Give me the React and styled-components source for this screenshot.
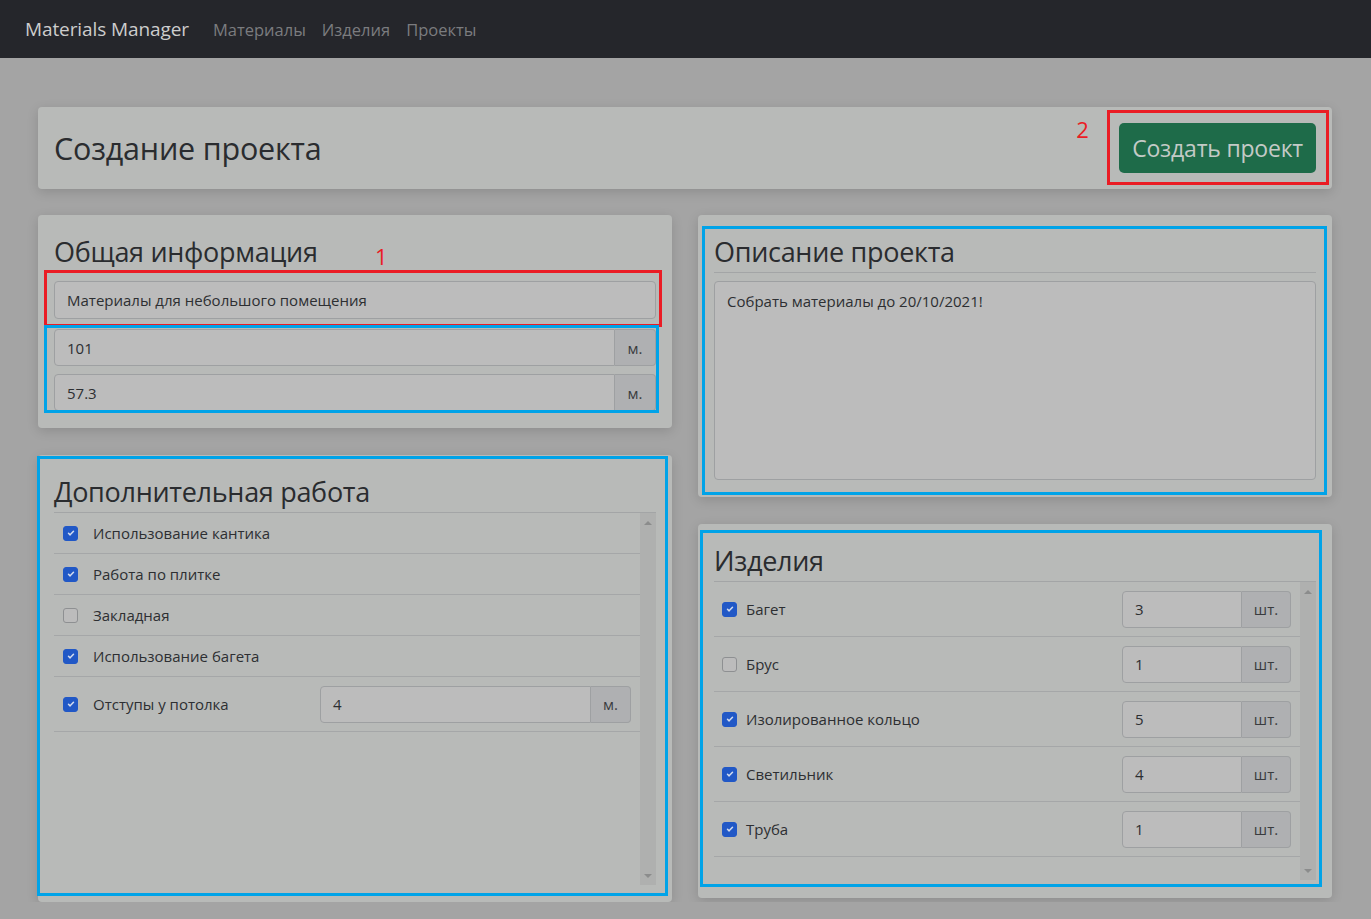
import styled, { createGlobalStyle } from "styled-components";

const works = [
  { label: "Использование кантика", checked: true },
  { label: "Работа по плитке", checked: true },
  { label: "Закладная", checked: false },
  { label: "Использование багета", checked: true },
  { label: "Отступы у потолка", checked: true, value: "4", unit: "м." },
];

const products = [
  { label: "Багет", checked: true, value: "3" },
  { label: "Брус", checked: false, value: "1" },
  { label: "Изолированное кольцо", checked: true, value: "5" },
  { label: "Светильник", checked: true, value: "4" },
  { label: "Труба", checked: true, value: "1" },
];

const Check = ({ checked }) => (
  <CheckBox $checked={checked}>
    {checked && (
      <svg width="10" height="10" viewBox="0 0 20 20">
        <path
          d="M5 10.5l3.2 3.2L15 6.5"
          fill="none"
          stroke="#d3dcee"
          strokeWidth="3"
          strokeLinecap="round"
          strokeLinejoin="round"
        />
      </svg>
    )}
  </CheckBox>
);

const Scroll = () => (
  <Track>
    <Arrow $up />
    <Arrow />
  </Track>
);

const App = () => {
  return (
    <>
      <GlobalStyle />
      <Navbar>
        <Brand>Materials Manager</Brand>
        <NavLinks>
          <NavLink>Материалы</NavLink>
          <NavLink>Изделия</NavLink>
          <NavLink>Проекты</NavLink>
        </NavLinks>
      </Navbar>

      <Main>
        <HeaderCard>
          <PageTitle>Создание проекта</PageTitle>
          <Marked>
            <CreateButton>Создать проект</CreateButton>
            <Annotation $color="red" $t={-13} $l={-12} $r={-13} $b={-12} />
            <Note style={{ left: -43, top: -5 }}>2</Note>
          </Marked>
        </HeaderCard>

        <Columns>
          <Column>
            <Card>
              <Title>Общая информация</Title>
              <Marked>
                <TextInput>Материалы для небольшого помещения</TextInput>
                <Annotation $color="red" $t={-11} $l={-10} $r={-6} $b={-8} />
                <Note style={{ left: 321, top: -36 }}>1</Note>
              </Marked>
              <Marked>
                <Groups>
                  <InputGroup>
                    <GroupInput>101</GroupInput>
                    <Addon $w={41}>м.</Addon>
                  </InputGroup>
                  <InputGroup>
                    <GroupInput>57.3</GroupInput>
                    <Addon $w={41}>м.</Addon>
                  </InputGroup>
                </Groups>
                <Annotation $color="blue" $t={-4} $l={-10} $r={-3} $b={-2} />
              </Marked>
            </Card>

            <Card $marked>
              <Title $divider>Дополнительная работа</Title>
              <ListArea $h={372}>
                <List>
                  {works.map((w) => (
                    <WorkRow key={w.label} $tall={!!w.value}>
                      <Check checked={w.checked} />
                      <WorkLabel>{w.label}</WorkLabel>
                      {w.value && (
                        <InputGroup $grow>
                          <GroupInput>{w.value}</GroupInput>
                          <Addon $w={40}>{w.unit}</Addon>
                        </InputGroup>
                      )}
                    </WorkRow>
                  ))}
                </List>
                <Scroll />
              </ListArea>
              <Annotation $color="blue" $t={1} $l={-1} $r={4} $b={6} />
            </Card>
          </Column>

          <Column>
            <Card $marked>
              <Title $divider $gap>Описание проекта</Title>
              <TextArea>Собрать материалы до 20/10/2021!</TextArea>
              <Annotation $color="blue" $t={11} $l={4} $r={5} $b={2} />
            </Card>

            <Card $marked $bottom={18}>
              <Title $divider>Изделия</Title>
              <ListArea $h={298}>
                <List>
                  {products.map((p) => (
                    <ProductRow key={p.label}>
                      <Check checked={p.checked} />
                      <ProductLabel>{p.label}</ProductLabel>
                      <InputGroup $width={169}>
                        <GroupInput>{p.value}</GroupInput>
                        <Addon $w={49}>шт.</Addon>
                      </InputGroup>
                    </ProductRow>
                  ))}
                </List>
                <Scroll />
              </ListArea>
              <Annotation $color="blue" $t={6} $l={2} $r={10} $b={11} />
            </Card>
          </Column>
        </Columns>
      </Main>
    </>
  );
};

const GlobalStyle = createGlobalStyle`
  * { box-sizing: border-box; }
  body {
    margin: 0;
    background: #a4a4a4;
    font-family: "Open Sans", "Noto Sans", sans-serif;
    color: #2b2d30;
  }
`;

const Navbar = styled.nav`
  height: 58px;
  background: #25262b;
  display: flex;
  align-items: center;
  padding-left: 25px;
`;

const Brand = styled.div`
  font-size: 19px;
  color: #cdcdcd;
  letter-spacing: -0.1px;
`;

const NavLinks = styled.div`
  display: flex;
  gap: 16px;
  margin-left: 24px;
`;

const NavLink = styled.a`
  font-size: 16.5px;
  color: #7b7c7f;
`;

const Main = styled.main`
  width: 1294px;
  margin: 49px 0 0 38px;
`;

const HeaderCard = styled.div`
  height: 82px;
  background: #b8bab8;
  border-radius: 4px;
  box-shadow: 0 3px 12px rgba(0, 0, 0, 0.14);
  display: flex;
  align-items: center;
  justify-content: space-between;
  padding: 0 16px;
`;

const PageTitle = styled.h1`
  margin: 0;
  font-size: 30.5px;
  font-weight: 400;
  color: #2a2c2f;
  letter-spacing: -0.2px;
`;

const Marked = styled.div`
  position: relative;
`;

const Annotation = styled.span`
  position: absolute;
  top: ${(p) => p.$t}px;
  left: ${(p) => p.$l}px;
  right: ${(p) => p.$r}px;
  bottom: ${(p) => p.$b}px;
  border: 3px solid ${(p) => (p.$color === "red" ? "#ea1c24" : "#00a3e8")};
  pointer-events: none;
`;

const Note = styled.span`
  position: absolute;
  font-size: 22px;
  color: #ea1c24;
  line-height: 1;
`;

const CreateButton = styled.button`
  height: 50px;
  padding: 0 13px;
  border: none;
  border-radius: 5px;
  background: #1e6b49;
  color: #c3cac6;
  font-family: inherit;
  font-size: 23px;
  letter-spacing: -0.2px;
`;

const Columns = styled.div`
  display: grid;
  grid-template-columns: 634px 634px;
  column-gap: 26px;
  margin-top: 26px;
  align-items: start;
`;

const Column = styled.div`
  display: flex;
  flex-direction: column;
  gap: 27px;
`;

const Card = styled.section`
  position: relative;
  background: #b8bab8;
  border-radius: 4px;
  box-shadow: 0 3px 12px rgba(0, 0, 0, 0.14);
  padding: 20px 16px ${(p) => p.$bottom || 17}px;
`;

const Title = styled.h2`
  margin: 0 0 ${(p) => (p.$gap ? 8 : p.$divider ? 0 : 12)}px;
  font-size: 27px;
  line-height: 34px;
  font-weight: 400;
  color: #2a2c2f;
  letter-spacing: -0.3px;
  padding-bottom: ${(p) => (p.$divider ? 3 : 0)}px;
  border-bottom: ${(p) => (p.$divider ? "1px solid #a3a5a6" : "none")};
`;

const field = `
  background: #bcbcbc;
  border: 1px solid #9ea0a2;
  font-size: 15px;
  color: #2d2f32;
  display: flex;
  align-items: center;
  padding: 0 12px;
`;

const TextInput = styled.div`
  ${field}
  height: 38px;
  border-radius: 4px;
`;

const Groups = styled.div`
  display: flex;
  flex-direction: column;
  gap: 8px;
  margin-top: 10px;
`;

const InputGroup = styled.div`
  display: flex;
  height: 37px;
  width: ${(p) => (p.$width ? `${p.$width}px` : "auto")};
  flex: ${(p) => (p.$grow ? "1" : "none")};
`;

const GroupInput = styled.div`
  ${field}
  flex: 1;
  border-radius: 4px 0 0 4px;
`;

const Addon = styled.div`
  width: ${(p) => p.$w}px;
  background: #afb0b2;
  border: 1px solid #9ea0a2;
  border-left: none;
  border-radius: 0 4px 4px 0;
  display: flex;
  align-items: center;
  justify-content: center;
  font-size: 15px;
  color: #3a3c3f;
`;

const TextArea = styled.div`
  ${field}
  align-items: flex-start;
  height: 199px;
  padding-top: 9px;
  border-radius: 4px;
`;

const ListArea = styled.div`
  display: flex;
  height: ${(p) => p.$h}px;
`;

const List = styled.div`
  flex: 1;
  display: flex;
  flex-direction: column;
`;

const Track = styled.div`
  width: 16px;
  background: #afb0af;
  display: flex;
  flex-direction: column;
  justify-content: space-between;
  align-items: center;
  padding: 8px 0 7px;
`;

const Arrow = styled.span`
  width: 0;
  height: 0;
  border-left: 4px solid transparent;
  border-right: 4px solid transparent;
  ${(p) =>
    p.$up
      ? "border-bottom: 4px solid #8b8c8c;"
      : "border-top: 4px solid #8b8c8c;"}
`;

const CheckBox = styled.span`
  width: 15px;
  height: 15px;
  flex: none;
  border-radius: 3px;
  display: flex;
  align-items: center;
  justify-content: center;
  background: ${(p) => (p.$checked ? "#2158c6" : "#bcbcbc")};
  border: 1px solid ${(p) => (p.$checked ? "#2158c6" : "#8e9092")};
`;

const WorkRow = styled.div`
  display: flex;
  align-items: center;
  height: ${(p) => (p.$tall ? 55 : 41)}px;
  padding: 0 9px;
  border-bottom: 1px solid #a5a7a8;
`;

const WorkLabel = styled.span`
  margin-left: 15px;
  width: 227px;
  font-size: 15px;
  color: #2d2f32;
`;

const ProductRow = styled.div`
  display: flex;
  align-items: center;
  height: 55px;
  padding: 0 9px 0 8px;
  border-bottom: 1px solid #a5a7a8;
`;

const ProductLabel = styled.span`
  flex: 1;
  margin-left: 9px;
  font-size: 15px;
  color: #2d2f32;
`;

export default App;
